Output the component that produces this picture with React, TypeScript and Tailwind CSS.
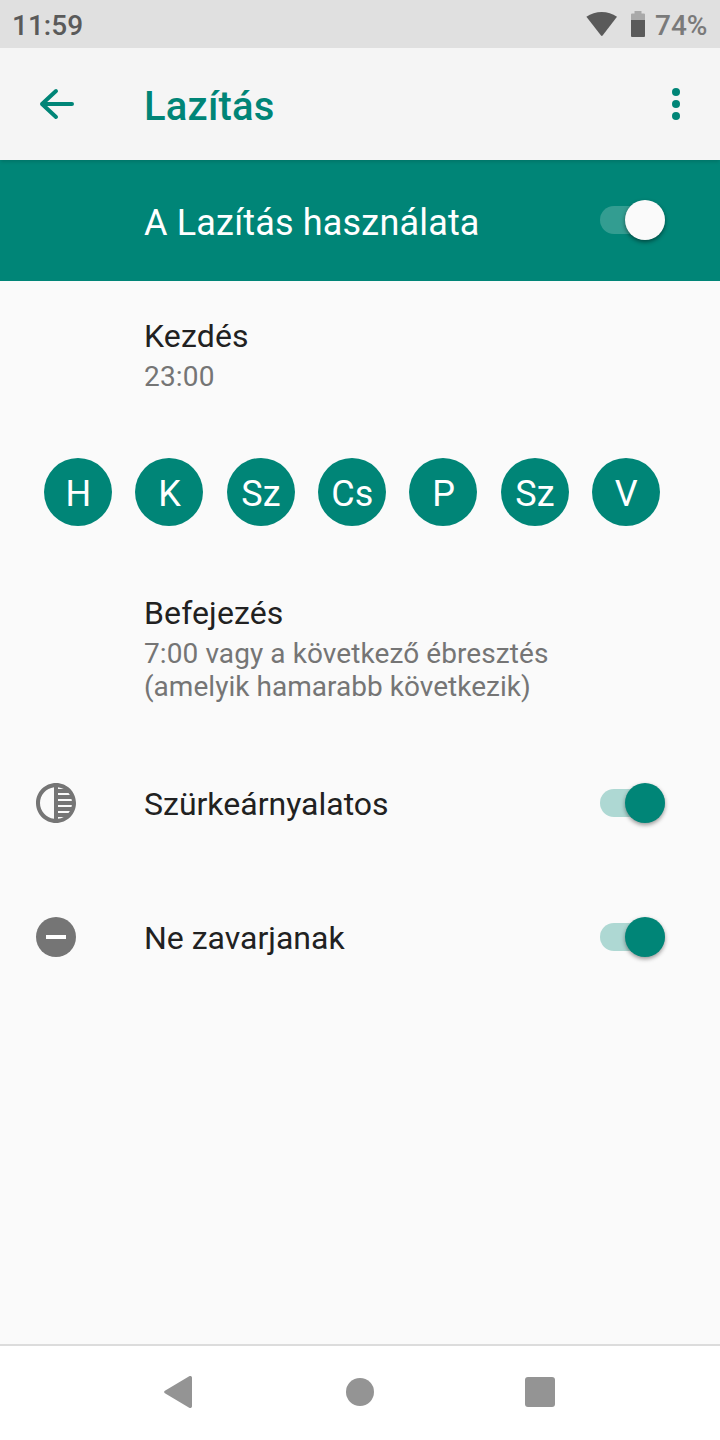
import React from 'react';
import { clsx } from 'clsx';

interface SwitchProps {
  label: string;
  onPrimary?: boolean;
}

interface ToggleRowProps {
  label: string;
  icon: React.ReactNode;
}

const DAYS = ['H', 'K', 'Sz', 'Cs', 'P', 'Sz', 'V'];

const Switch: React.FC<SwitchProps> = ({ label, onPrimary }) => (
  <button
    role="switch"
    aria-checked="true"
    aria-label={label}
    className={clsx(
      'flex h-7 w-[65px] shrink-0 items-center justify-end rounded-full',
      onPrimary ? 'bg-[#339d91]' : 'bg-[#aed8d3]',
    )}
  >
    <span
      className={clsx(
        'size-10 shrink-0 rounded-full',
        onPrimary
          ? 'bg-[#fafafa] shadow-[0_2px_4px_rgba(0,0,0,0.45)]'
          : 'bg-[#008577] shadow-[0_2px_4px_rgba(0,0,0,0.4)]',
      )}
    />
  </button>
);

const StatusBar: React.FC = () => (
  <div className="flex h-12 items-center bg-[#e0e0e0] pr-[13px] pl-3 text-[28px] leading-8 font-medium">
    <span className="pt-[3px] text-[#5a5a5a]">11:59</span>
    <svg className="ml-auto h-6 w-8" viewBox="0 0 32 24" fill="#5a5a5a">
      <path d="M15 23.500.400 4.800C4.800 1.600 10.200 0 15.700 0s10.900 1.600 15.300 4.800L16.600 23.500q-.8.900-1.600 0Z" />
    </svg>
    <svg className="ml-[13px] h-[26px] w-[14px]" viewBox="0 0 14 26">
      <path d="M3.500 0h7v2.500H13a1 1 0 0 1 1 1V9H0V3.500a1 1 0 0 1 1-1h2.500Z" fill="#a9a9a9" />
      <path d="M0 9h14v16a1 1 0 0 1-1 1H1a1 1 0 0 1-1-1Z" fill="#5a5a5a" />
    </svg>
    <span className="ml-[10px] w-[52px] pt-[3px] whitespace-nowrap text-[#7a7a7a]">74%</span>
  </div>
);

const AppBar: React.FC = () => (
  <header className="relative flex h-28 items-center bg-[#f5f5f5] px-8 text-[#008577] shadow-[0_3px_3px_-1px_rgba(0,0,0,0.12)]">
    <button aria-label="Vissza">
      <svg
        className="size-12"
        viewBox="0 0 48 48"
        fill="none"
        stroke="currentColor"
        strokeWidth="4"
        strokeLinecap="round"
        strokeLinejoin="round"
      >
        <path d="M40 24H10M24 11 10 24l14 13" />
      </svg>
    </button>
    <h1 className="ml-16 pt-[5px] text-[40px] leading-[48px] font-medium tracking-[0.2px]">Lazítás</h1>
    <button aria-label="További lehetőségek" className="ml-auto flex w-6 flex-col items-center gap-1">
      <span className="size-2 rounded-full bg-current" />
      <span className="size-2 rounded-full bg-current" />
      <span className="size-2 rounded-full bg-current" />
    </button>
  </header>
);

const ToggleRow: React.FC<ToggleRowProps> = ({ label, icon }) => (
  <div className="flex h-[134px] items-center pr-[55px] pl-8 text-[#757575]">
    {icon}
    <span className="ml-16 pt-[2px] text-[32px] leading-[38px] text-[#212121]">{label}</span>
    <div className="ml-auto flex">
      <Switch label={label} />
    </div>
  </div>
);

const NavBar: React.FC = () => (
  <nav className="flex h-24 items-center justify-center border-t-2 border-[#dcdcdc] bg-white pb-[2px] text-[#949494]">
    <div className="flex w-[180px] justify-center">
      <svg className="h-8 w-7 -translate-x-[2px]" viewBox="0 0 28 32" fill="currentColor">
        <path d="M25.200.3.900 14.700a1.500 1.500 0 0 0 0 2.600l24.300 14.400c1.300.7 2.800 0 2.800-1.500V1.800C28 .3 26.500-.4 25.200.3Z" />
      </svg>
    </div>
    <div className="flex w-[180px] justify-center">
      <span className="size-7 rounded-full bg-current" />
    </div>
    <div className="flex w-[180px] justify-center">
      <span className="size-[30px] rounded-[3px] bg-current" />
    </div>
  </nav>
);

export default function App() {
  return (
    <div className="flex h-[1440px] w-[720px] flex-col bg-[#fafafa] font-['Roboto',sans-serif]">
      <StatusBar />
      <AppBar />
      <div className="flex h-[121px] items-center bg-[#008577] pr-[55px] pb-px pl-36 text-white">
        <span className="pt-[5px] text-[36px] leading-[42px] tracking-[0.18px]">A Lazítás használata</span>
        <div className="ml-auto flex">
          <Switch label="A Lazítás használata" onPrimary />
        </div>
      </div>

      <main className="flex grow flex-col">
        {/* Start time */}
        <section className="pt-9 pl-36">
          <h2 className="text-[32px] leading-[38px] tracking-[0.15px] text-[#212121]">Kezdés</h2>
          <p className="mt-[5px] text-[28px] leading-[33px] tracking-[0.2px] text-[#757575]">23:00</p>
        </section>

        {/* Active days */}
        <div className="mt-[65px] flex justify-between pr-[60px] pl-11">
          {DAYS.map((day, i) => (
            <button
              key={i}
              className="flex size-[68px] items-center justify-center rounded-full bg-[#008577] pt-[3px] pl-[0.5px] text-[36px] leading-[42px] text-white"
            >
              {day}
            </button>
          ))}
        </div>

        {/* End time */}
        <section className="mt-[68px] pl-36">
          <h2 className="text-[32px] leading-[38px] tracking-[0.12px] text-[#212121]">Befejezés</h2>
          <p className="mt-[5px] text-[28px] leading-[33px] text-[#757575]">
            <span className="block tracking-[0.09px]">7:00 vagy a következő ébresztés</span>
            <span className="block tracking-[0.03px]">(amelyik hamarabb következik)</span>
          </p>
        </section>

        <div className="mt-[33px]">
          <ToggleRow
            label="Szürkeárnyalatos"
            icon={
              <svg className="size-12" viewBox="0 0 24 24" fill="currentColor">
                <path d="M12 2C6.480 2 2 6.480 2 12s4.480 10 10 10 10-4.480 10-10S17.520 2 12 2zm-1 17.930c-3.940-.490-7-3.850-7-7.930s3.050-7.440 7-7.930v15.860zm2-15.860c1.030.130 2 .450 2.870.930H13v-.930zM13 7h5.240c.250.310.480.650.680 1H13V7zm0 3h6.740c.080.330.150.660.190 1H13v-1zm0 9.930V19h2.870c-.870.480-1.840.800-2.870.930zM18.240 17H13v-1h5.920c-.200.350-.430.690-.680 1zm1.500-3H13v-1h6.930c-.040.340-.110.670-.190 1z" />
              </svg>
            }
          />
          <ToggleRow
            label="Ne zavarjanak"
            icon={
              <svg className="size-12" viewBox="0 0 24 24">
                <circle cx="12" cy="12" r="10" fill="currentColor" />
                <path d="M7 11h10v2H7z" fill="#fff" />
              </svg>
            }
          />
        </div>
      </main>

      <NavBar />
    </div>
  );
}
